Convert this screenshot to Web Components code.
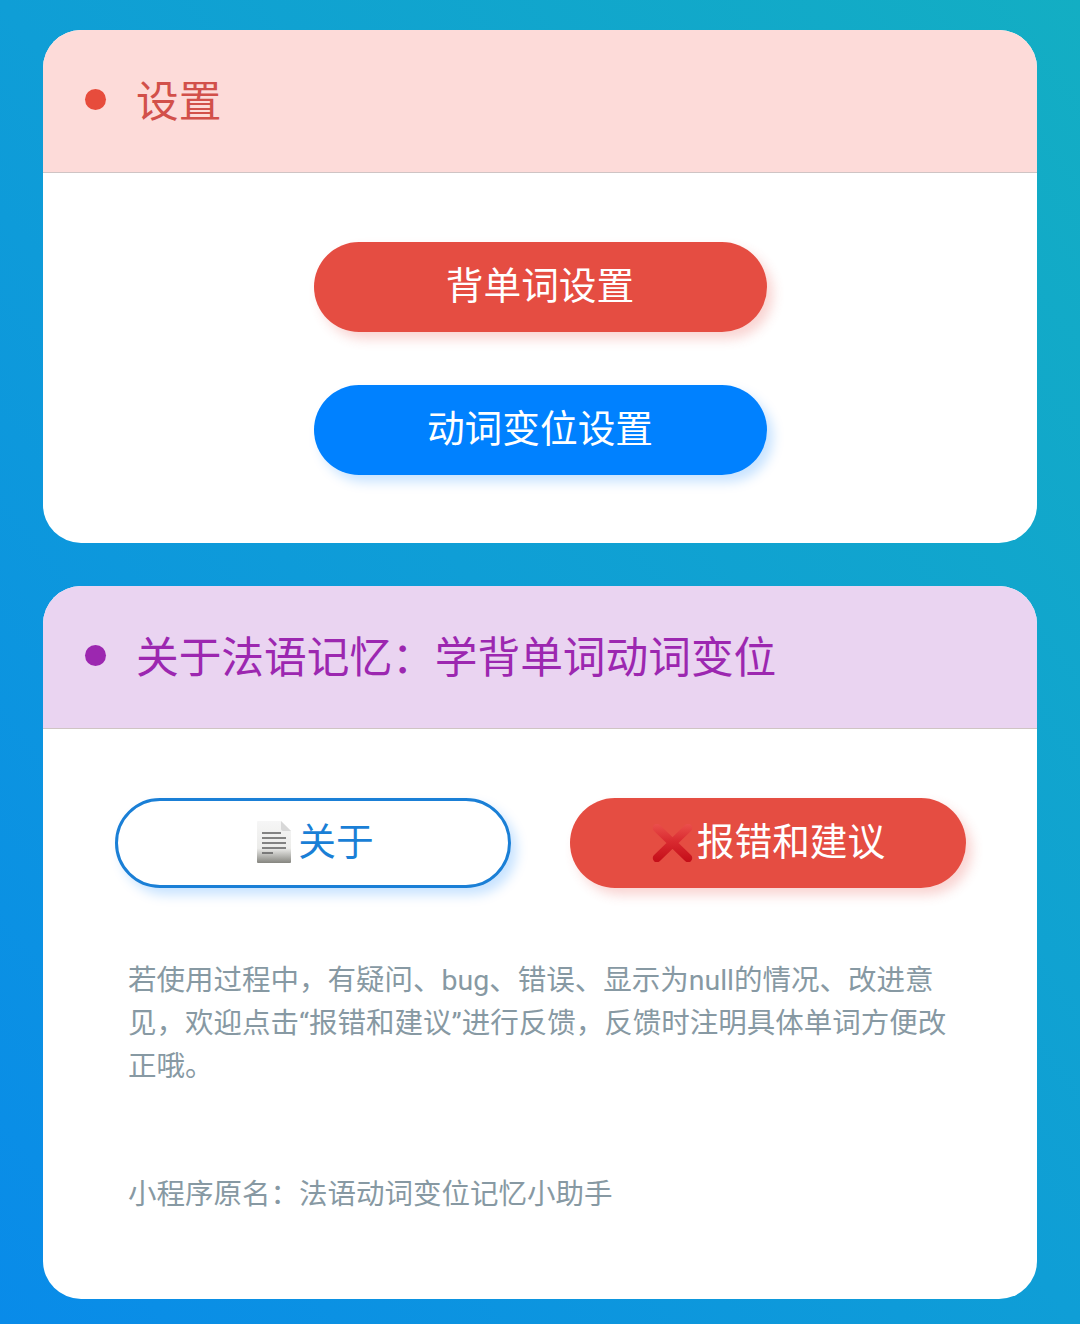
<!DOCTYPE html>
<html lang="zh-CN">
<head>
<meta charset="utf-8">
<title>设置</title>
<style>
    html, body { margin: 0; height: 100%; }
    body {
        width: 1080px;
        height: 1324px;
        overflow: hidden;
        background: linear-gradient(to bottom left, #13aec3 0%, #0f9ed6 50%, #098be9 100%);
        font-family: Roboto, "Noto Sans CJK SC", sans-serif;
    }
</style>
</head>
<body>
<settings-page>
    <section-card tone="red" heading="设置">
        <div style="display:flex;flex-direction:column;align-items:center;gap:53px;padding-bottom:68px">
            <pill-button variant="red" wide>背单词设置</pill-button>
            <pill-button variant="blue" wide>动词变位设置</pill-button>
        </div>
    </section-card>
    <section-card tone="purple" heading="关于法语记忆：学背单词动词变位">
        <div style="display:flex;gap:59px;padding:0 71px 0 72px">
            <pill-button variant="outline"><doc-icon></doc-icon>关于</pill-button>
            <pill-button variant="red"><cross-icon></cross-icon>报错和建议</pill-button>
        </div>
        <note-text>
            <p>若使用过程中，有疑问、bug、错误、显示为null的情况、改进意见，欢迎点击“报错和建议”进行反馈，反馈时注明具体单词方便改正哦。</p>
            <p>小程序原名：法语动词变位记忆小助手</p>
        </note-text>
    </section-card>
</settings-page>

<script>
    class SettingsPage extends HTMLElement {
        constructor() {
            super();
            this.attachShadow({ mode: 'open' });
            this.shadowRoot.innerHTML = `
                <style>
                    :host {
                        display: flex;
                        flex-direction: column;
                        gap: 43px;
                        padding: 30px 43px 0;
                    }
                </style>
                <slot></slot>
            `;
        }
    }

    const TONES = {
        red: { bg: '#fddbd9', dot: '#e74c3c', text: '#d2504a' },
        purple: { bg: '#ead4f1', dot: '#9c27b0', text: '#9c27b0' }
    };

    class SectionCard extends HTMLElement {
        constructor() {
            super();
            this.attachShadow({ mode: 'open' });
        }

        connectedCallback() {
            const tone = TONES[this.getAttribute('tone')] || TONES.red;
            this.shadowRoot.innerHTML = `
                <style>
                    :host {
                        display: block;
                        background: #fff;
                        border-radius: 38px;
                        overflow: hidden;
                    }
                    .head {
                        display: flex;
                        align-items: center;
                        gap: 30px;
                        height: 142px;
                        padding-left: 42px;
                        background: ${tone.bg};
                        border-bottom: 1px solid #cfc4c4;
                        color: ${tone.text};
                        font-size: 42.7px;
                    }
                    .dot {
                        width: 21px;
                        height: 21px;
                        margin-top: -4px;
                        border-radius: 50%;
                        background: ${tone.dot};
                    }
                    .title { margin-top: -6px; }
                    .body { padding-top: 69px; }
                </style>
                <div class="head">
                    <span class="dot"></span>
                    <span class="title">${this.getAttribute('heading')}</span>
                </div>
                <div class="body"><slot></slot></div>
            `;
        }
    }

    class PillButton extends HTMLElement {
        constructor() {
            super();
            this.attachShadow({ mode: 'open' });
            this.shadowRoot.innerHTML = `
                <style>
                    :host {
                        display: flex;
                        flex: none;
                        align-items: center;
                        justify-content: center;
                        box-sizing: border-box;
                        width: 396px;
                        height: 90px;
                        padding-bottom: 10px;
                        border-radius: 45px;
                        font-size: 37.7px;
                        color: #fff;
                        cursor: pointer;
                    }
                    :host([wide]) { width: 453px; }
                    :host([variant="red"]) {
                        background: #e54d42;
                        box-shadow: 6px 7px 12px rgba(229, 77, 66, 0.24);
                    }
                    :host([variant="blue"]) {
                        background: #0081ff;
                        box-shadow: 6px 7px 12px rgba(0, 129, 255, 0.22);
                    }
                    :host([variant="outline"]) {
                        background: #fff;
                        color: #1a7fd6;
                        border: 3px solid #1a7fd6;
                        box-shadow: 6px 7px 12px rgba(0, 129, 255, 0.22);
                    }
                </style>
                <slot></slot>
            `;
        }
    }

    class DocIcon extends HTMLElement {
        constructor() {
            super();
            this.attachShadow({ mode: 'open' });
            this.shadowRoot.innerHTML = `
                <style>
                    :host { display: block; width: 34px; height: 42px; margin: 8px 7px 0 5px; }
                    svg { display: block; }
                </style>
                <svg width="34" height="42" viewBox="0 0 34 42">
                    <defs>
                        <linearGradient id="paper" x1="0" y1="0" x2="0" y2="1">
                            <stop offset="0" stop-color="#f6f6f6"/>
                            <stop offset="0.65" stop-color="#ececea"/>
                            <stop offset="1" stop-color="#85857f"/>
                        </linearGradient>
                    </defs>
                    <path d="M0 1Q0 0 1 0H24L34 10V41Q34 42 33 42H1Q0 42 0 41Z" fill="url(#paper)"/>
                    <path d="M24 0L34 10H26Q24 10 24 8Z" fill="#d8d8d8"/>
                    <path d="M5 12H24M5 17H29M5 22H29M5 27H29M5 32H16" stroke="#5f5f5f" stroke-width="1.4" fill="none"/>
                </svg>
            `;
        }
    }

    class CrossIcon extends HTMLElement {
        constructor() {
            super();
            this.attachShadow({ mode: 'open' });
            this.shadowRoot.innerHTML = `
                <style>
                    :host { display: block; width: 43px; height: 38px; margin: 10px 3px 0 0; }
                    svg { display: block; }
                </style>
                <svg width="43" height="38" viewBox="0 0 43 38">
                    <defs>
                        <linearGradient id="crossRed" gradientUnits="userSpaceOnUse" x1="0" y1="0" x2="0" y2="38">
                            <stop offset="0" stop-color="#ea4f4b"/>
                            <stop offset="0.45" stop-color="#d92a30"/>
                            <stop offset="1" stop-color="#c40d18"/>
                        </linearGradient>
                    </defs>
                    <path d="M6 4L37 34M37 4L6 34" stroke="url(#crossRed)" stroke-width="8.5" stroke-linecap="round" fill="none"/>
                </svg>
            `;
        }
    }

    class NoteText extends HTMLElement {
        constructor() {
            super();
            this.attachShadow({ mode: 'open' });
            this.shadowRoot.innerHTML = `
                <style>
                    :host {
                        display: block;
                        padding: 71px 90px 83px 85px;
                        color: #8799a3;
                        font-size: 28.5px;
                        line-height: 43px;
                    }
                    ::slotted(p) { margin: 0; }
                    ::slotted(p:last-child) { margin-top: 85px; }
                </style>
                <slot></slot>
            `;
        }
    }

    customElements.define('settings-page', SettingsPage);
    customElements.define('section-card', SectionCard);
    customElements.define('pill-button', PillButton);
    customElements.define('doc-icon', DocIcon);
    customElements.define('cross-icon', CrossIcon);
    customElements.define('note-text', NoteText);
</script>
</body>
</html>
